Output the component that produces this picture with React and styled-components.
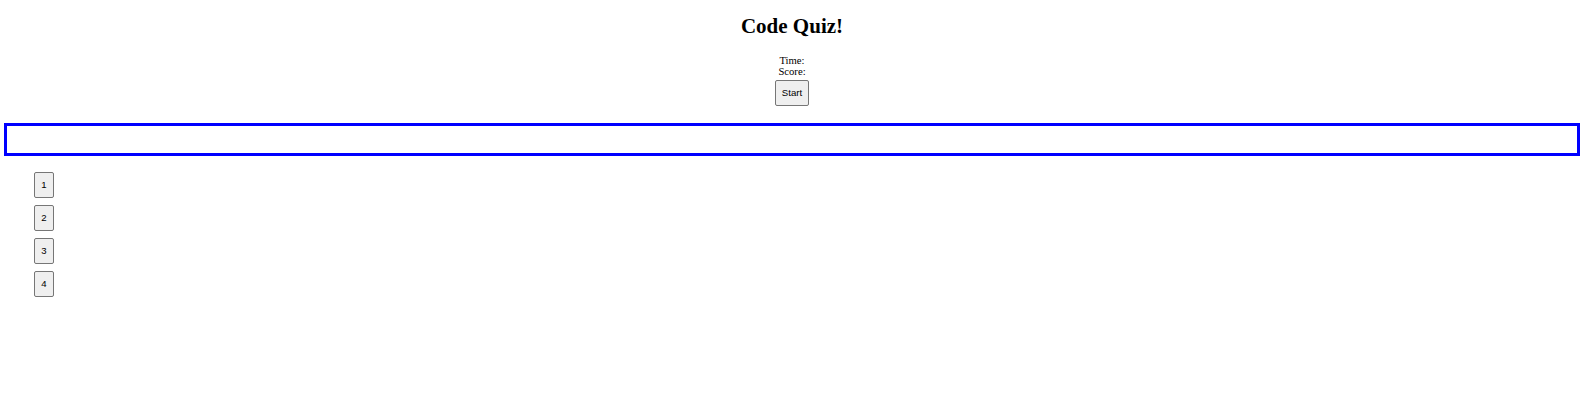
import styled, { createGlobalStyle } from 'styled-components';

const GlobalStyle = createGlobalStyle`
    body {
        margin: 0;
        font-family: "Liberation Serif", "Times New Roman", serif;
        background-color: #ffffff;
    }
`;

const Page = styled.div`
    padding: 0 4px;
`;

const Header = styled.header`
    display: flex;
    flex-direction: column;
    align-items: center;
    padding-top: 14px;
`;

const Title = styled.h1`
    margin: 0 0 17px;
    font-size: 21px;
    font-weight: bold;
    line-height: 24px;
`;

const Stat = styled.div`
    font-size: 10.67px;
    line-height: 11px;
`;

const Button = styled.button`
    font-family: "Liberation Sans", Arial, sans-serif;
    font-size: 9.6px;
    padding: 6px;
    min-width: 20px;
    border: 1px solid #767676;
    border-radius: 2px;
    background-color: #efefef;
    color: #000;
    line-height: 12px;
`;

const StartButton = styled(Button)`
    margin-top: 3px;
`;

const QuestionBox = styled.div`
    margin-top: 17px;
    height: 27px;
    border: 3px solid blue;
`;

const Choices = styled.ol`
    list-style: none;
    margin: 16px 0 0;
    padding: 0 0 0 30px;
    display: flex;
    flex-direction: column;
    align-items: flex-start;
    gap: 7px;
`;

function App() {
    return (
        <Page>
            <GlobalStyle />
            <Header>
                <Title>Code Quiz!</Title>
                <Stat>Time:</Stat>
                <Stat>Score:</Stat>
                <StartButton>Start</StartButton>
            </Header>
            <QuestionBox></QuestionBox>
            <Choices>
                {[1, 2, 3, 4].map((n) => (
                    <li key={n}>
                        <Button>{n}</Button>
                    </li>
                ))}
            </Choices>
        </Page>
    );
}

export default App;
